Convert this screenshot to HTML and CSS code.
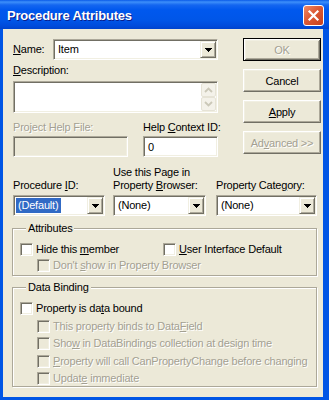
FILE: index.html
```html
<!DOCTYPE html>
<html lang="en">
<head>
  <meta charset="UTF-8" />
  <title>Procedure Attributes</title>
  <link rel="stylesheet" href="styles.css">
</head>
<body>
  <div class="window">
    <div class="titlebar">
      <span class="title">Procedure Attributes</span>
      <span class="close">
        <svg width="13" height="13" viewBox="0 0 13 13"><path d="M2.5 2.5 L10.5 10.5 M10.5 2.5 L2.5 10.5" stroke="#fff" stroke-width="2.2" stroke-linecap="square" fill="none"/></svg>
      </span>
    </div>

    <div class="client">
      <div class="top">
        <div class="form">
          <div class="name-row">
            <span class="lbl name-lbl"><u>N</u>ame:</span>
            <div class="combo sunken name-combo">
              <span class="val">Item</span>
              <span class="drop"><svg width="7" height="4" viewBox="0 0 7 4"><path d="M0 0h7v1h-1v1h-1v1h-1v1h-1v-1h-1v-1h-1v-1h-1z" fill="#000"/></svg></span>
            </div>
          </div>
          <div class="lbl desc-lbl"><u>D</u>escription:</div>
          <div class="field sunken desc">
            <div class="vscroll">
              <span class="sbtn"><svg width="9" height="6" viewBox="0 0 9 6"><path d="M1 5 L4.5 1.5 L8 5" stroke="#CBC8B8" stroke-width="1.8" fill="none"/></svg></span>
              <span class="sbtn"><svg width="9" height="6" viewBox="0 0 9 6"><path d="M1 1 L4.5 4.5 L8 1" stroke="#CBC8B8" stroke-width="1.8" fill="none"/></svg></span>
            </div>
          </div>
          <div class="help-row">
            <div class="help-file">
              <div class="lbl off">Project Help File:</div>
              <div class="field sunken box-off"></div>
            </div>
            <div class="help-ctx">
              <div class="lbl">Help <u>C</u>ontext ID:</div>
              <div class="field sunken ctx-box">0</div>
            </div>
          </div>
        </div>

        <div class="buttons">
          <button class="btn default dim">OK</button>
          <button class="btn">Cancel</button>
          <button class="btn"><u>A</u>pply</button>
          <button class="btn dim">Ad<u>v</u>anced &gt;&gt;</button>
        </div>
      </div>

      <div class="combos">
        <div class="col col-proc">
          <div class="lbl">Procedure <u>I</u>D:</div>
          <div class="combo sunken">
            <span class="val selected">(Default)</span>
            <span class="drop"><svg width="7" height="4" viewBox="0 0 7 4"><path d="M0 0h7v1h-1v1h-1v1h-1v1h-1v-1h-1v-1h-1v-1h-1z" fill="#000"/></svg></span>
          </div>
        </div>
        <div class="col col-page">
          <div class="lbl">Use this Page in</div>
          <div class="lbl">Property <u>B</u>rowser:</div>
          <div class="combo sunken">
            <span class="val">(None)</span>
            <span class="drop"><svg width="7" height="4" viewBox="0 0 7 4"><path d="M0 0h7v1h-1v1h-1v1h-1v1h-1v-1h-1v-1h-1v-1h-1z" fill="#000"/></svg></span>
          </div>
        </div>
        <div class="col col-cat">
          <div class="lbl">Property Cate<u>g</u>ory:</div>
          <div class="combo sunken">
            <span class="val">(None)</span>
            <span class="drop"><svg width="7" height="4" viewBox="0 0 7 4"><path d="M0 0h7v1h-1v1h-1v1h-1v1h-1v-1h-1v-1h-1v-1h-1z" fill="#000"/></svg></span>
          </div>
        </div>
      </div>

      <fieldset class="group attrs">
        <legend>Attributes</legend>
        <div class="cbrow">
          <label class="cbitem hide-item"><span class="cb sunken"></span><span>Hide this <u>m</u>ember</span></label>
          <label class="cbitem"><span class="cb sunken"></span><span><u>U</u>ser Interface Default</span></label>
        </div>
        <div class="cbrow sub">
          <label class="cbitem off"><span class="cb sunken cb-off"></span><span>Don't <u>s</u>how in Property Browser</span></label>
        </div>
      </fieldset>

      <fieldset class="group binding">
        <legend>Data Binding</legend>
        <div class="cbrow">
          <label class="cbitem"><span class="cb sunken"></span><span>Property is da<u>t</u>a bound</span></label>
        </div>
        <div class="cbrow sub gap5">
          <label class="cbitem off"><span class="cb sunken cb-off"></span><span>This property binds to Data<u>F</u>ield</span></label>
        </div>
        <div class="cbrow sub gap4">
          <label class="cbitem off"><span class="cb sunken cb-off"></span><span>Sho<u>w</u> in DataBindings collection at design time</span></label>
        </div>
        <div class="cbrow sub gap5">
          <label class="cbitem off"><span class="cb sunken cb-off"></span><span><u>P</u>roperty will call CanPropertyChange before changing</span></label>
        </div>
        <div class="cbrow sub gap4">
          <label class="cbitem off"><span class="cb sunken cb-off"></span><span>Updat<u>e</u> immediate</span></label>
        </div>
      </fieldset>
    </div>
  </div>
</body>
</html>
```

FILE: styles.css
```css
body {
  margin: 0;
  font-family: "Liberation Sans", Arial, sans-serif;
  font-size: 11px;
  letter-spacing: -0.2px;
  color: #000;
}
.window {
  width: 329px;
  height: 400px;
  background: #0055E5;
  display: flex;
  flex-direction: column;
}
.titlebar {
  height: 29px;
  flex: none;
  box-sizing: border-box;
  display: flex;
  align-items: center;
  justify-content: space-between;
  padding: 2px 5px 0 7px;
  background: linear-gradient(to bottom, #0A5AE8 0, #3D8FFA 2px, #1466F0 5px, #0058EE 10px, #0056E8 20px, #004BDB 26px, #0043CC 29px);
}
.title {
  color: #fff;
  font-weight: bold;
  font-size: 13px;
  letter-spacing: -0.2px;
  text-shadow: 1px 1px 0 #0A1E8C;
}
.close {
  width: 21px;
  height: 21px;
  box-sizing: border-box;
  border: 1px solid #fff;
  border-radius: 3px;
  background: linear-gradient(135deg, #EE8A66 0, #DC5A36 45%, #C8401C 100%);
  display: flex;
  align-items: center;
  justify-content: center;
}
.client {
  flex: 1;
  margin: 0 6px 3px 3px;
  background: #ECE9D8;
  padding: 9px 2px 0 10px;
}
.lbl {
  line-height: 13px;
  white-space: nowrap;
}
.off {
  color: #A3A092;
  text-shadow: 1px 1px 0 #fff;
}

/* 3D look */
.sunken {
  box-sizing: border-box;
  border: 1px solid;
  border-color: #ACA899 #fff #fff #ACA899;
  box-shadow: inset 1px 1px 0 #716F64, inset -1px -1px 0 #F1EFE2;
}

/* top part */
.top {
  display: flex;
}
.form {
  width: 205px;
}
.name-row {
  display: flex;
  align-items: center;
  margin-top: 1px;
}
.name-lbl {
  width: 40px;
}
.combo {
  height: 21px;
  padding: 1px;
  background: #fff;
  display: flex;
  align-items: center;
  justify-content: space-between;
}
.name-combo {
  width: 165px;
}
.val {
  margin-left: 1px;
  padding: 0 3px 0 2px;
  line-height: 15px;
}
.val.selected {
  background: #316AC5;
  color: #fff;
}
.drop {
  width: 16px;
  height: 17px;
  box-sizing: border-box;
  background: #ECE9D8;
  border: 1px solid;
  border-color: #F1EFE2 #716F64 #716F64 #F1EFE2;
  box-shadow: inset 1px 1px 0 #fff, inset -1px -1px 0 #ACA899;
  display: flex;
  align-items: center;
  justify-content: center;
}
.desc-lbl {
  margin-top: 4px;
}
.field {
  background: #fff;
  height: 21px;
  padding: 1px;
}
.desc {
  margin-top: 4px;
  height: 32px;
  display: flex;
  justify-content: flex-end;
}
.vscroll {
  width: 15px;
  display: flex;
  flex-direction: column;
}
.sbtn {
  flex: 1;
  box-sizing: border-box;
  border: 1px solid #E6E3D6;
  border-radius: 2px;
  background: #F4F2EA;
  display: flex;
  align-items: center;
  justify-content: center;
}
.help-row {
  display: flex;
  margin-top: 8px;
}
.help-file {
  width: 115px;
}
.help-ctx {
  width: 75px;
  margin-left: 15px;
}
.help-row .field {
  margin-top: 2px;
}
.box-off {
  background: #ECE9D8;
}
.ctx-box {
  padding-left: 4px;
  line-height: 19px;
}

/* buttons */
.buttons {
  margin-left: 25px;
  display: flex;
  flex-direction: column;
  gap: 8px;
}
.btn {
  width: 78px;
  height: 23px;
  padding: 0;
  font: inherit;
  letter-spacing: inherit;
  color: #000;
  background: #ECE9D8;
  border: 1px solid;
  border-color: #fff #716F64 #716F64 #fff;
  box-shadow: inset -1px -1px 0 #ACA899, inset 1px 1px 0 #F1EFE2;
}
.btn.default {
  border-color: #000;
  box-shadow: inset 1px 1px 0 #fff, inset -1px -1px 0 #716F64, inset 2px 2px 0 #F1EFE2, inset -2px -2px 0 #ACA899;
}
.btn.dim {
  color: #A3A092;
  text-shadow: 1px 1px 0 #fff;
}

/* combo row */
.combos {
  display: flex;
  align-items: flex-end;
  margin-top: 9px;
}
.col .combo {
  margin-top: 3px;
}
.col-proc {
  width: 92px;
}
.col-page {
  width: 93px;
  margin-left: 8px;
}
.col-cat {
  width: 101px;
  margin-left: 10px;
}

/* group boxes */
.group {
  margin: 6px 0 0 -1px;
  width: 305px;
  box-sizing: border-box;
  padding: 8px 0 3px 7px;
  border: 1px solid #ACA899;
  box-shadow: inset 1px 1px 0 #fff, 1px 1px 0 #fff;
}
.group legend {
  margin-left: 6px;
  padding: 0 2px;
  line-height: 13px;
  background: #ECE9D8;
}
.binding {
  margin-top: 5px;
  padding-bottom: 1px;
}
.cbrow {
  display: flex;
  height: 13px;
  line-height: 13px;
}
.attrs .sub {
  margin-top: 3px;
}
.sub {
  padding-left: 17px;
}
.gap5 {
  margin-top: 5px;
}
.gap4 {
  margin-top: 4px;
}
.cbitem {
  display: flex;
  align-items: center;
  white-space: nowrap;
}
.hide-item {
  width: 143px;
}
.cb {
  width: 13px;
  height: 13px;
  flex: none;
  background: #fff;
  margin-right: 3px;
}
.cb-off {
  background: #ECE9D8;
}
```
